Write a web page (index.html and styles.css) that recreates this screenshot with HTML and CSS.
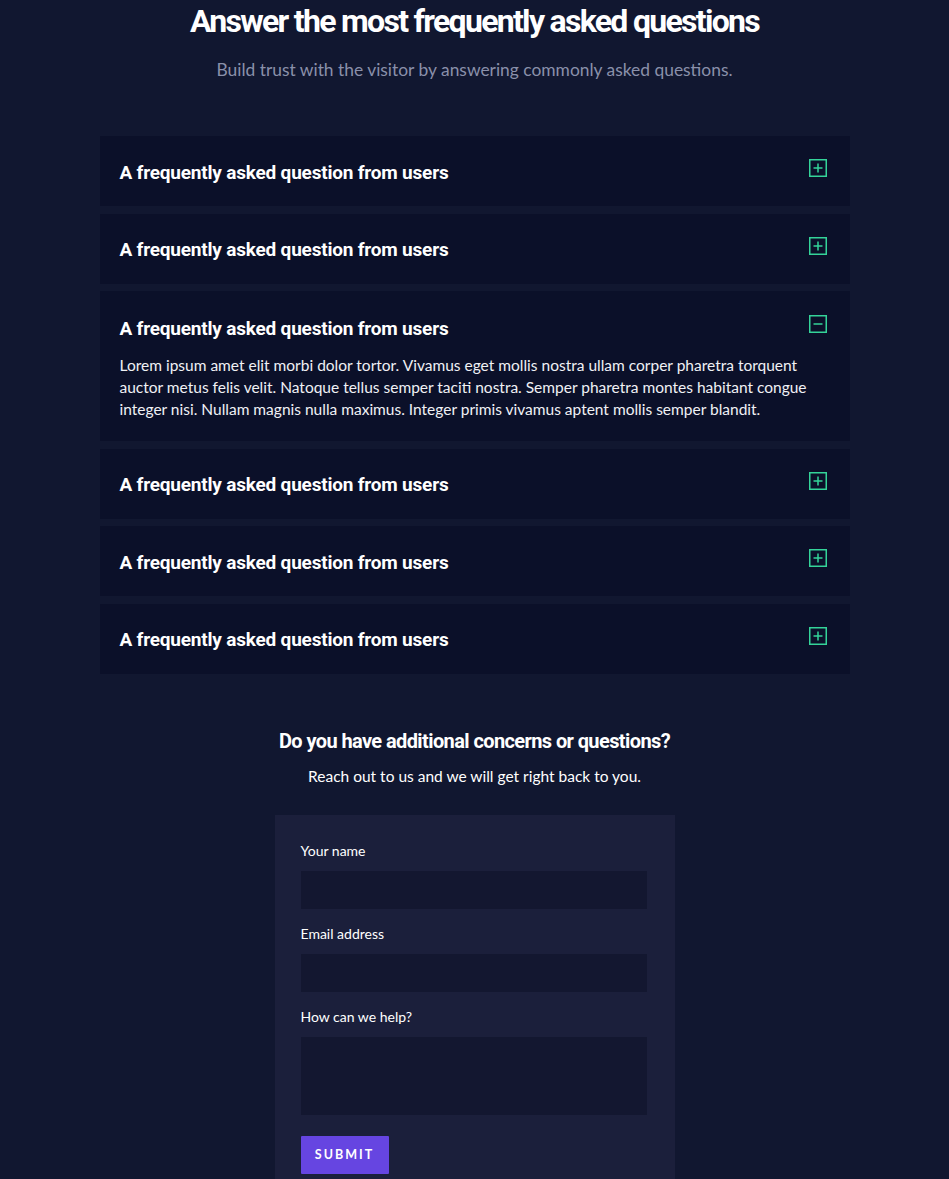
FILE: index.html
```html
<!DOCTYPE html>
<html>
<head>
<meta charset="utf-8">
<link rel="stylesheet" href="styles.css">
</head>
<body>
<main class="page">
  <header class="intro">
    <h1 class="title">Answer the most frequently asked questions</h1>
    <p class="subtitle">Build trust with the visitor by answering commonly asked questions.</p>
  </header>

  <section class="faq">
    <div class="item">
      <div class="q"><h3>A frequently asked question from users</h3><span class="icon"><svg viewBox="0 0 18 18" width="18" height="18"><rect x="0.75" y="0.75" width="16.5" height="16.5" fill="none" stroke="#34d399" stroke-width="1.5"/><path d="M9 4.5v9M4.5 9h9" stroke="#34d399" stroke-width="1.5"/></svg></span></div>
    </div>
    <div class="item">
      <div class="q"><h3>A frequently asked question from users</h3><span class="icon"><svg viewBox="0 0 18 18" width="18" height="18"><rect x="0.75" y="0.75" width="16.5" height="16.5" fill="none" stroke="#34d399" stroke-width="1.5"/><path d="M9 4.5v9M4.5 9h9" stroke="#34d399" stroke-width="1.5"/></svg></span></div>
    </div>
    <div class="item open">
      <div class="q"><h3>A frequently asked question from users</h3><span class="icon"><svg viewBox="0 0 18 18" width="18" height="18"><rect x="0.75" y="0.75" width="16.5" height="16.5" fill="none" stroke="#34d399" stroke-width="1.5"/><path d="M4.5 9h9" stroke="#34d399" stroke-width="1.5"/></svg></span></div>
      <p class="a">Lorem ipsum amet elit morbi dolor tortor. Vivamus eget mollis nostra ullam corper pharetra torquent auctor metus felis velit. Natoque tellus semper taciti nostra. Semper pharetra montes habitant congue integer nisi. Nullam magnis nulla maximus. Integer primis vivamus aptent mollis semper blandit.</p>
    </div>
    <div class="item">
      <div class="q"><h3>A frequently asked question from users</h3><span class="icon"><svg viewBox="0 0 18 18" width="18" height="18"><rect x="0.75" y="0.75" width="16.5" height="16.5" fill="none" stroke="#34d399" stroke-width="1.5"/><path d="M9 4.5v9M4.5 9h9" stroke="#34d399" stroke-width="1.5"/></svg></span></div>
    </div>
    <div class="item">
      <div class="q"><h3>A frequently asked question from users</h3><span class="icon"><svg viewBox="0 0 18 18" width="18" height="18"><rect x="0.75" y="0.75" width="16.5" height="16.5" fill="none" stroke="#34d399" stroke-width="1.5"/><path d="M9 4.5v9M4.5 9h9" stroke="#34d399" stroke-width="1.5"/></svg></span></div>
    </div>
    <div class="item">
      <div class="q"><h3>A frequently asked question from users</h3><span class="icon"><svg viewBox="0 0 18 18" width="18" height="18"><rect x="0.75" y="0.75" width="16.5" height="16.5" fill="none" stroke="#34d399" stroke-width="1.5"/><path d="M9 4.5v9M4.5 9h9" stroke="#34d399" stroke-width="1.5"/></svg></span></div>
    </div>
  </section>

  <section class="contact">
    <h2 class="contact-title">Do you have additional concerns or questions?</h2>
    <p class="contact-sub">Reach out to us and we will get right back to you.</p>
    <form class="card">
      <label class="label">Your name</label>
      <div class="input"></div>
      <label class="label">Email address</label>
      <div class="input"></div>
      <label class="label">How can we help?</label>
      <div class="input area"></div>
      <button type="button" class="btn">SUBMIT</button>
    </form>
  </section>
</main>
</body>
</html>
```

FILE: styles.css
```css
* { box-sizing: border-box; }
html, body { margin: 0; padding: 0; }
body {
  background: #111730;
  font-family: "Lato", "Noto Sans", sans-serif;
  color: #fff;
}
.page {
  display: flex;
  flex-direction: column;
  align-items: center;
}
.intro {
  text-align: center;
  padding-top: 2px;
}
.title {
  margin: 0;
  font-family: "Roboto", sans-serif;
  font-weight: 700;
  font-size: 32px;
  line-height: 38px;
  letter-spacing: -1.7px;
}
.subtitle {
  margin: 18px 0 0;
  color: #8a90aa;
  font-size: 17.4px;
  line-height: 24px;
}
.faq {
  width: 750px;
  margin-top: 54px;
  display: flex;
  flex-direction: column;
  gap: 7.5px;
}
.item {
  background: #0b1029;
  padding: 0 23px 0 20px;
}
.q {
  height: 70px;
  padding-top: 2px;
  display: flex;
  align-items: center;
  justify-content: space-between;
}
.q h3 {
  margin: 0;
  font-family: "Roboto", sans-serif;
  font-weight: 700;
  font-size: 19px;
  letter-spacing: -0.2px;
}
.icon { display: flex; margin-top: -8px; }
.item.open .q { height: 72px; }
.a {
  margin: -9px 0 0;
  padding-bottom: 21px;
  font-size: 15.5px;
  line-height: 22px;
  color: #f0f1f5;
}
.contact {
  margin-top: 53px;
  display: flex;
  flex-direction: column;
  align-items: center;
}
.contact-title {
  margin: 0;
  font-family: "Roboto", sans-serif;
  font-weight: 700;
  font-size: 20px;
  line-height: 28px;
  letter-spacing: -0.6px;
}
.contact-sub {
  margin: 10px 0 0;
  font-size: 15.5px;
  line-height: 22px;
}
.card {
  margin-top: 28px;
  width: 400px;
  background: #1b1f3b;
  padding: 26px 28px 30px 26px;
  display: flex;
  flex-direction: column;
}
.label {
  font-size: 14px;
  line-height: 20px;
  margin-bottom: 10px;
}
.input {
  height: 38px;
  background: #131730;
  margin-bottom: 15px;
}
.input.area { height: 78px; margin-bottom: 21px; }
.btn {
  align-self: flex-start;
  width: 88px;
  height: 38px;
  border: 0;
  border-radius: 1px;
  background: #6645e1;
  color: #fff;
  font-family: "Lato", sans-serif;
  font-weight: 700;
  font-size: 12.5px;
  letter-spacing: 2px;
}
```
